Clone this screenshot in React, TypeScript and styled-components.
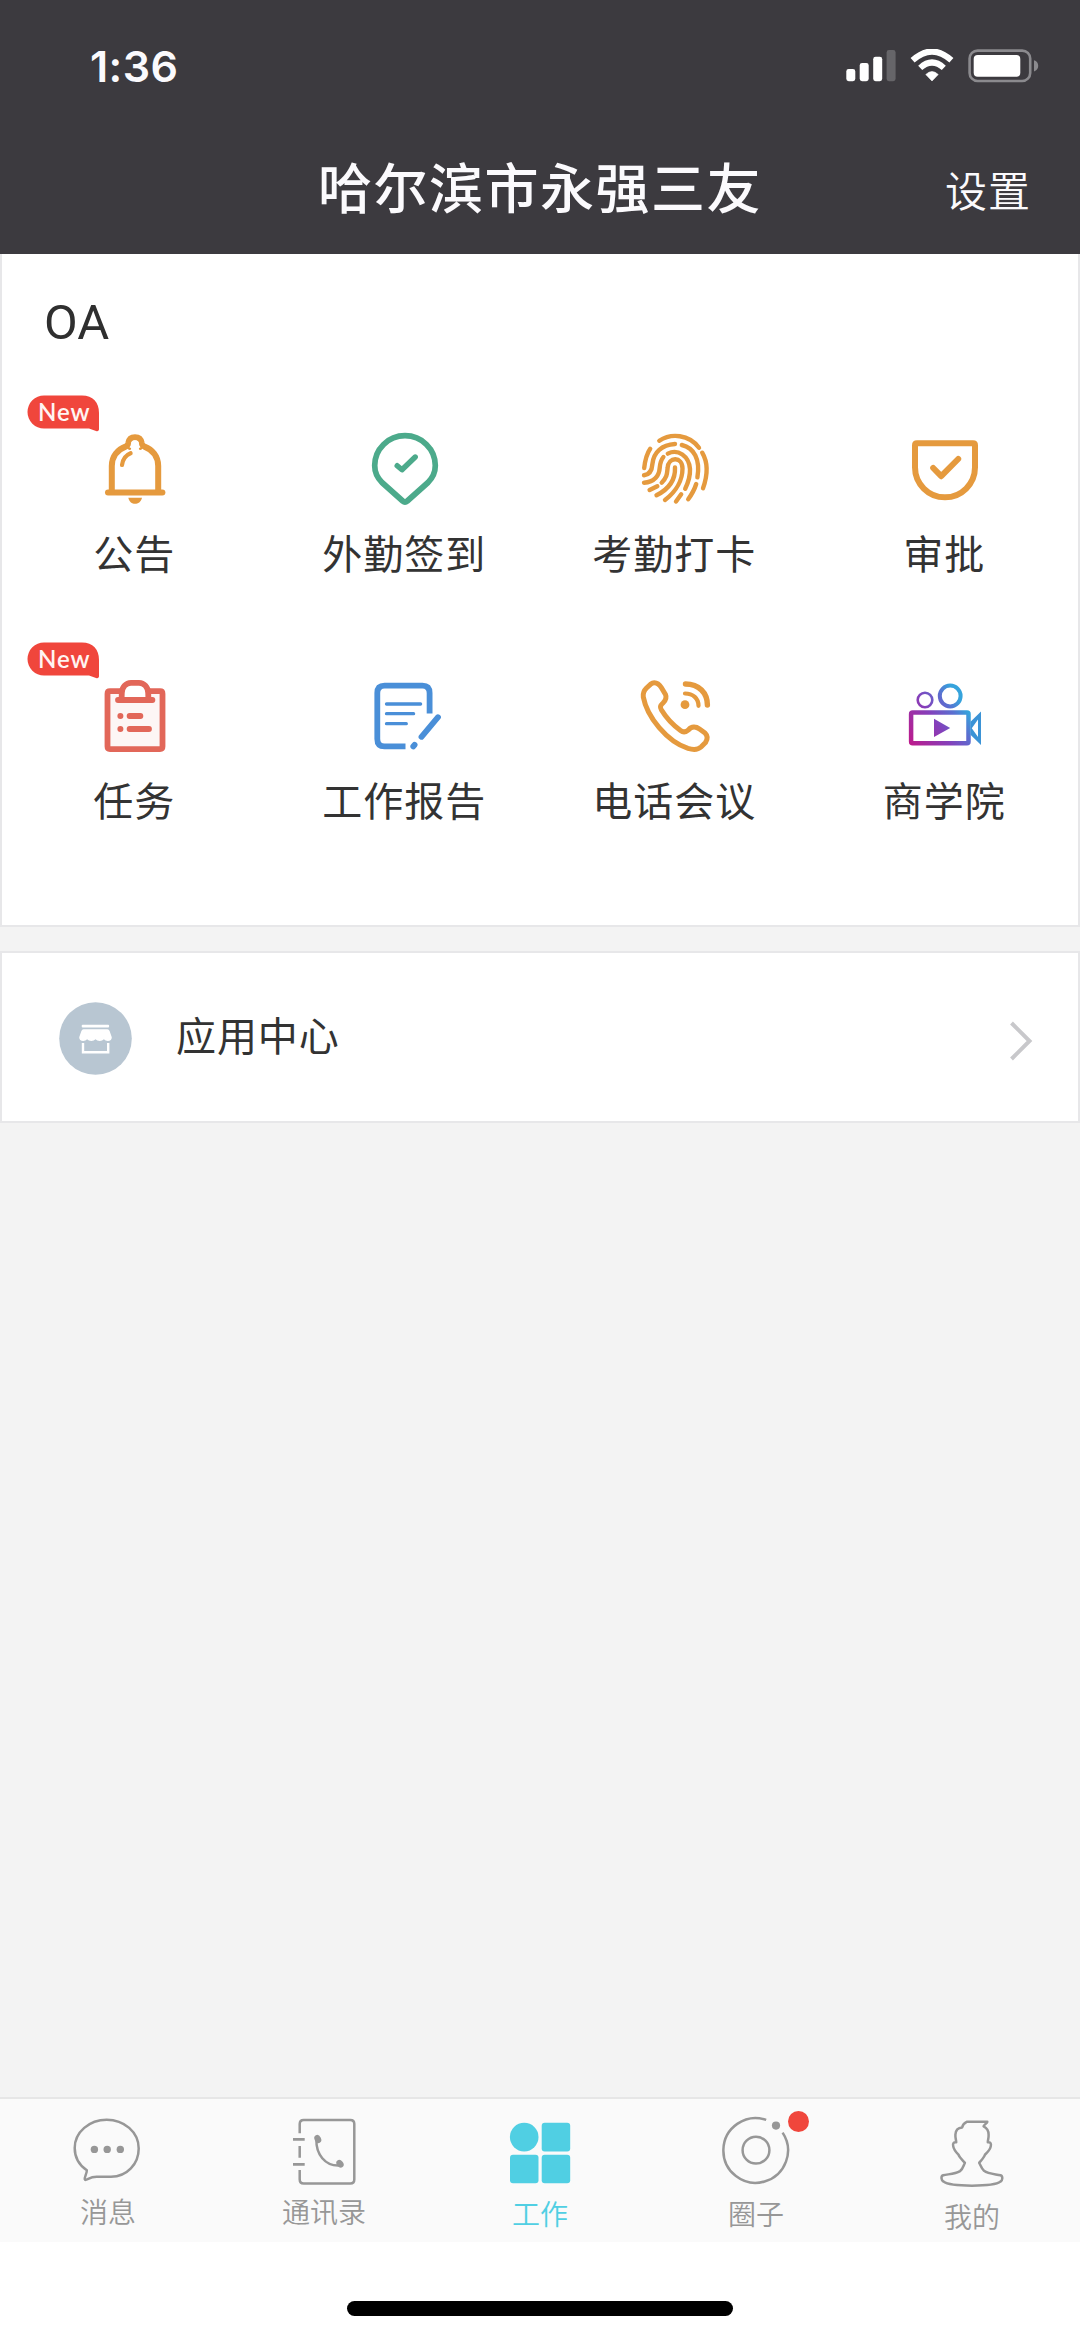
import React from "react";
import styled, { createGlobalStyle } from "styled-components";

const GlobalStyle = createGlobalStyle`
  * { box-sizing: border-box; }
  body {
    margin: 0;
    background: #ffffff;
    font-family: "Noto Sans CJK SC", "Noto Sans", sans-serif;
  }
`;

const Screen = styled.div`
  width: 1080px;
  height: 2339px;
  display: flex;
  flex-direction: column;
  background: #f3f3f3;
  overflow: hidden;
`;

const Header = styled.header`
  height: 254px;
  background: #3c3a3f;
  color: #fbfafd;
`;

const StatusBar = styled.div`
  height: 132px;
  padding: 0 41px 0 90px;
  display: flex;
  align-items: center;
  justify-content: space-between;
`;

const Clock = styled.div`
  font: 600 43px/48px Inter, sans-serif;
  letter-spacing: 0.4px;
`;

const StatusIcons = styled.div`
  display: flex;
  align-items: center;
  gap: 14px;
`;

const NavBar = styled.div`
  height: 118px;
  padding: 0 49px 8px;
  display: grid;
  grid-template-columns: 1fr auto 1fr;
  align-items: center;
`;

const NavTitle = styled.h1`
  grid-column: 2;
  margin: 0;
  font-size: 54px;
  font-weight: 500;
  line-height: 70px;
  letter-spacing: 1.5px;
  padding-bottom: 2px;
`;

const NavAction = styled.button`
  justify-self: end;
  border: 0;
  padding: 4px 0 0;
  background: none;
  color: inherit;
  font-family: inherit;
  font-size: 42px;
  font-weight: 350;
  line-height: 60px;
  letter-spacing: 1px;
`;

const Panel = styled.section`
  background: #ffffff;
  border: 2px solid #e7e7e9;
`;

const AppsPanel = styled(Panel)`
  height: 673px;
  border-top: 0;
`;

const SectionTitle = styled.h2`
  margin: 0;
  padding: 39px 0 0 42px;
  font: 400 49px/60px Roboto, sans-serif;
  color: #2f2f2f;
`;

const AppGrid = styled.div`
  margin: 37px -2px 0;
  display: grid;
  grid-template-columns: repeat(4, 270px);
  grid-auto-rows: 247px;
`;

const AppCell = styled.div`
  position: relative;
  padding-top: 33px;
  display: flex;
  flex-direction: column;
  align-items: center;
`;

const AppLabel = styled.div`
  margin-top: 9px;
  font-size: 40px;
  line-height: 60px;
  letter-spacing: 1px;
  margin-right: 1.5px;
  color: #333333;
`;

const NewBadge = styled.span`
  position: absolute;
  left: 27px;
  top: 5px;
  width: 72px;
  height: 37px;
  padding-left: 11px;
  color: #fff4f2;
  font: 600 24px/34px Lato, sans-serif;
  letter-spacing: 0.9px;
`;

const BadgeShape = styled.svg`
  position: absolute;
  left: 0;
  top: 0;
`;

const BadgeText = styled.span`
  position: relative;
`;

const CenterRow = styled(Panel)`
  margin-top: 24px;
  height: 172px;
  padding: 3px 45px 0 57px;
  display: flex;
  align-items: center;
`;

const CenterLabel = styled.div`
  flex: 1;
  margin-left: 44px;
  font-size: 40px;
  line-height: 60px;
  letter-spacing: 0.9px;
  color: #333333;
  padding-bottom: 9px;
`;

const Spacer = styled.div`
  flex: 1;
`;

const TabBar = styled.nav`
  height: 145px;
  border-top: 2px solid #e6e6e6;
  background: #fafafa;
  display: grid;
  grid-template-columns: repeat(5, 216px);
`;

const Tab = styled.div<{ $active?: boolean }>`
  position: relative;
  padding-top: 16px;
  display: flex;
  flex-direction: column;
  align-items: center;
  color: ${(p) => (p.$active ? "#50cfe3" : "#979797")};
`;

const TabLabel = styled.div<{ $gap: number }>`
  margin-top: ${(p) => p.$gap}px;
  font-size: 28px;
  font-weight: 350;
  line-height: 40px;
`;

const UnreadDot = styled.span`
  position: absolute;
  left: 140px;
  top: 12px;
  width: 21px;
  height: 21px;
  border-radius: 50%;
  background: #f0463c;
`;

const HomeArea = styled.div`
  height: 97px;
  background: #ffffff;
  display: flex;
  justify-content: center;
  padding-top: 59px;
`;

const HomeIndicator = styled.div`
  width: 386px;
  height: 15px;
  border-radius: 8px;
  background: #000000;
`;

const ORANGE = "#e59a3e";

const line = {
  fill: "none",
  strokeLinecap: "round" as const,
  strokeLinejoin: "round" as const,
};

function Icon({ children }: { children: React.ReactNode }) {
  return (
    <svg width="90" height="90" viewBox="0 0 90 90">
      {children}
    </svg>
  );
}

const Bell = () => (
  <Icon>
    <g {...line} stroke={ORANGE} strokeWidth="6">
      <path d="M18 69.5H72.4" />
      <path d="M21.8 68V43C21.8 33 28 26.5 35.5 23.6C37.5 22.8 38 21.5 38.3 20C39 16 41.5 14.2 45 14.2S51 16 51.7 20C52 21.5 52.5 22.8 54.5 23.6C62 26.5 68.2 33 68.2 43V68" />
      <path d="M32 42C32.7 36.5 36 32 40.6 30.2" strokeWidth="4.2" />
    </g>
    <path d="M38.5 22.5C38.5 24.5 41 25.5 45 25.5S51.5 24.5 51.5 22.5L54 24L51 27Q45 25.5 39 27L36 24Z" fill={ORANGE} />
    <circle cx="45" cy="21.4" r="4.1" fill="#fff" />
    <path d="M41.5 22.5H48.5L49.3 28H40.7Z" fill="#fff" />
    <path d="M38.3 74.7H52C51 79 48 80.8 45 80.8S39.3 79 38.3 74.7Z" fill={ORANGE} />
  </Icon>
);

const Pin = () => (
  <Icon>
    <g {...line} stroke="#4caa8b" strokeWidth="5.7">
      <path d="M42.7 78L22 59.5C17 54.5 14.7 48.5 14.7 42.5A30.3 29.8 0 0 1 75.3 42.5C75.3 48.5 73 54.5 68 59.5L47.3 78Q45 80 42.7 78Z" />
      <path d="M37.2 42.7L42 46.8L55.2 34" strokeWidth="5.4" />
    </g>
  </Icon>
);

const Fingerprint = () => (
  <Icon>
    <g {...line} stroke={ORANGE} strokeWidth="4.4">
      <path d="M29.3 17.8C41 9.8 59 11.3 69 24.7" />
      <path d="M20.2 25.7C16.5 31 15 38 14.2 45" />
      <path d="M72.2 29.7C78 39.5 77.8 52 73 65.3" />
      <path d="M14 52.3C20 51.5 22 47 22.4 41C23.5 29 32 21.8 45 21" />
      <path d="M51.8 22C64 25 70.5 36 67.4 54.3" />
      <path d="M66.2 61C64.5 66.5 62 71 58.2 76.3" />
      <path d="M14 59.7C25 59 29.2 52 29.7 45C30 40 31 37 33.4 34" />
      <path d="M37.8 30.6C48 25.5 59 33 60 46C60.3 53 58 60 55.2 65.7" />
      <path d="M19.6 67L27.3 63.2" />
      <path d="M31.7 59.7C37.5 54 37 50 37.6 45C38.2 33.3 52.5 33.3 52.5 45.5C52.5 56 47 68 35 77" />
      <path d="M45 44.5C45.5 56 39 66 26.5 72.3" />
      <path d="M46 78.5L51.2 71.3" />
    </g>
  </Icon>
);

const Approval = () => (
  <Icon>
    <g {...line} stroke={ORANGE} strokeWidth="6">
      <path d="M17 20.3H73Q75 20.3 75 22.3V44.3A30 30 0 0 1 15 44.3V22.3Q15 20.3 17 20.3Z" />
      <path d="M33.2 45L41.2 53.2L58.2 36" />
    </g>
  </Icon>
);

const Clipboard = () => (
  <Icon>
    <rect x="19" y="22" width="52" height="57" fill="#fdf6f5" />
    <path d="M33 30V23Q34 13 41 13H49Q57 13 58 23V30Z" fill="#fff" />
    <g {...line} stroke="#e26759" strokeWidth="5.8">
      <path d="M31 21.2H20Q17.5 21.2 17.5 23.7V76.6Q17.5 79.1 20 79.1H70Q72.5 79.1 72.5 76.6V23.7Q72.5 21.2 70 21.2H59" />
      <path d="M28 30H62.4" />
      <path d="M31.6 29L31.8 23C32 17 36 12.8 41 12.8H49C54 12.8 58 17 58.2 23L58.4 29" />
      <path d="M39.6 46H50.4M39.6 59H59" />
    </g>
    <circle cx="30.4" cy="46" r="3" fill="#e26759" />
    <circle cx="30.4" cy="59" r="3" fill="#e26759" />
  </Icon>
);

const Report = () => (
  <Icon>
    <g fill="none" stroke="#4a8fd8" strokeWidth="5.8">
      <path d="M69.6 43.5V23Q69.6 15.6 62.5 15.6H24.5Q17.3 15.6 17.3 23V69Q17.3 76.4 24.5 76.4H45.5" />
      <path d="M78 47.2L61.5 66.8" strokeLinecap="round" />
      <path d="M54.6 74.8L53.3 76.4" strokeLinecap="round" />
    </g>
    <path d="M26.5 34H60.6M26.5 43.7H53.6M26.5 53.7H46.3" {...line} stroke="#4a8fd8" strokeWidth="3.3" />
  </Icon>
);

const PhoneMeeting = () => (
  <Icon>
    <g {...line} stroke={ORANGE} strokeWidth="5">
      <path d="M24.3 12.7C27 12.7 29.5 14.5 31.3 17.5L35.5 24.5C37 28 35.5 30.5 33 33C30 35.8 29.8 37 31.5 40C36 47.5 43 55 50.5 60.5C53.5 62.8 56 62 58.5 59.8C61.5 56.2 66 56.5 69.5 59L75 63C78 66 77.5 69.5 75.5 72.5L71 77C68 79.8 63.5 80 58 78.4C37 71.5 17 47 13.3 27C12.8 23.5 14 20.5 16.5 18L20.5 14.3Q22.5 12.7 24.3 12.7Z" />
      <path d="M55 23.5C63 23.5 68.5 28.5 68.5 35.8" strokeWidth="4.2" />
      <path d="M55.5 14C69 14 77.4 23 77.4 35" strokeWidth="5.4" />
    </g>
    <circle cx="55" cy="34.7" r="4.4" fill={ORANGE} />
  </Icon>
);

const Camera = () => (
  <Icon>
    <defs>
      <linearGradient id="film" gradientUnits="userSpaceOnUse" x1="10" y1="72" x2="70" y2="32">
        <stop offset="0" stopColor="#bb1b8d" />
        <stop offset="0.45" stopColor="#8440bb" />
        <stop offset="0.72" stopColor="#5a6fd0" />
        <stop offset="0.9" stopColor="#36a3dc" />
      </linearGradient>
    </defs>
    <g fill="none" stroke="url(#film)">
      <rect x="11.1" y="42.4" width="57.4" height="30.8" rx="1.5" strokeWidth="4.5" />
      <circle cx="25" cy="30" r="7.3" strokeWidth="2.6" />
      <circle cx="50.2" cy="26" r="10.4" strokeWidth="4" />
    </g>
    <path d="M34 48.8L50.2 58L34 67Z" fill="url(#film)" />
    <path fillRule="evenodd" d="M70.5 51.7L81 41.5V75L70.5 64.8ZM71.8 58.3L78 67V49.5Z" fill="#3b93d6" />
  </Icon>
);

const Shop = () => (
  <svg width="73" height="73" viewBox="0 0 73 73">
    <circle cx="36.5" cy="36.5" r="36.3" fill="#b8c6d2" />
    <rect x="22.7" y="22.8" width="27.4" height="2.6" rx="1" fill="#fff" />
    <path d="M24.5 27.3H48.5Q50 27.3 50.6 29L52.8 35.3Q52.8 39 48.8 39Q46.3 39 44.9 37.2Q43.4 39 40.7 39Q38 39 36.5 37.2Q35 39 32.3 39Q29.6 39 28.1 37.2Q26.7 39 24.2 39Q20.2 39 20.2 35.3L22.4 29Q23 27.3 24.5 27.3Z" fill="#fff" />
    <path d="M24 41V50.2H49.2V41" fill="none" stroke="#fff" strokeWidth="2.4" />
  </svg>
);

const ChevronIcon = styled.svg`
  margin-top: 4px;
`;

const Chevron = () => (
  <ChevronIcon width="24" height="42" viewBox="0 0 24 42">
    <path d="M2.5 3L20.5 21L2.5 39" fill="none" stroke="#c8c8cb" strokeWidth="4" />
  </ChevronIcon>
);

function TabIcon({ children }: { children: React.ReactNode }) {
  return (
    <svg width="72" height="72" viewBox="0 0 72 72" fill="none" stroke="currentColor" strokeWidth="2.5" strokeLinejoin="round">
      {children}
    </svg>
  );
}

const ChatIcon = () => (
  <TabIcon>
    <path d="M24.7 61.8H39C55 61.8 66.7 49 66.7 33.5C66.7 17 52 4.7 34.7 4.7S2.7 17 2.7 33C2.7 42 7 50 14.8 55.2C15.2 58 12.2 62 12.8 64.4C13.6 66.4 17 61.8 24.7 61.8Z" />
    <g fill="currentColor" stroke="none">
      <circle cx="22.4" cy="34.4" r="3.7" />
      <circle cx="35.2" cy="34.4" r="3.7" />
      <circle cx="48.3" cy="34.4" r="3.7" />
    </g>
  </TabIcon>
);

const ContactsIcon = () => (
  <TabIcon>
    <path d="M11.7 18.3V9Q11.7 5 15.7 5H62.3Q66.3 5 66.3 9V64.5Q66.3 68.5 62.3 68.5H15.7Q11.7 68.5 11.7 64.5V55M11.7 31V42.7" />
    <path d="M5 24.3H16.7M5 49.3H16.7" strokeWidth="2.8" />
    <path d="M28.4 25C28 39 37 51 51 50.5" />
    <g fill="currentColor" stroke="none">
      <ellipse cx="29.8" cy="24" rx="3.2" ry="4.2" transform="rotate(-28 29.8 24)" />
      <ellipse cx="52" cy="48.8" rx="3.2" ry="4.2" transform="rotate(-38 52 48.8)" />
    </g>
  </TabIcon>
);

const WorkIcon = () => (
  <TabIcon>
    <g fill="currentColor" stroke="none">
      <circle cx="20.2" cy="22.1" r="14.3" />
      <rect x="37.7" y="7.8" width="28.5" height="28.6" rx="3" />
      <rect x="6" y="39.7" width="28.5" height="28.6" rx="3" />
      <rect x="37.7" y="39.7" width="28.5" height="28.6" rx="3" />
    </g>
  </TabIcon>
);

const CircleIcon = () => (
  <TabIcon>
    <path d="M46.2 4.9A32.3 32.3 0 1 0 62.6 17.6" />
    <circle cx="36" cy="35.2" r="13.4" />
    <circle cx="56" cy="10.6" r="4.1" fill="currentColor" stroke="none" />
  </TabIcon>
);

const ProfileIcon = () => (
  <TabIcon>
    <path d="M30.7 7.7H51.3C50.8 9.5 48.5 10 47.6 12.2C51.8 14.3 52.6 17 52.6 20.5C52.8 24 51.8 26 51.8 28.2C54.2 28 55.5 29 54.8 32C54.2 36 51 38.5 49 40.5C48 43.5 45 46.5 43.2 48.7C44.5 51 45.5 54.5 48 56.7C52.5 60 60 60 64.5 61.2C67 62 66.8 66 64.5 67.5C60 71 50 71.6 36 71.6S12 71 7.5 67.5C5 66 4.7 62 7.2 61.2C12 60 19 60 24 57C27 55 27.5 51 28.9 48.7C27 46.5 23.5 43.5 22.5 40.5C20.5 38.5 17.8 36 17.2 32C16.5 29 17.8 28 20.2 28.2C20.2 26 19.2 24 19.4 20.5C19.6 16.5 21.5 13.5 26.2 13.3C26.5 11 28.5 8.8 30.7 7.7Z" transform="translate(0 -0.9)" />
  </TabIcon>
);

const Signal = () => (
  <svg width="50" height="34" viewBox="0 0 50 34">
    <g fill="#fff">
      <rect x="0.3" y="20" width="9" height="12.2" rx="2.4" />
      <rect x="13.7" y="14" width="9" height="18.2" rx="2.4" />
      <rect x="27.2" y="7.8" width="9" height="24.4" rx="2.4" />
      <rect x="40.6" y="1" width="9" height="31.2" rx="2.4" opacity="0.22" />
    </g>
  </svg>
);

const Wifi = () => (
  <svg width="44" height="34" viewBox="0 0 44 34">
    <path d="M22 32L15.8 25.5Q22 19.5 28.2 25.5Z" fill="#fff" stroke="#fff" strokeWidth="0.6" />
    <path d="M10.2 18.9Q22 8.1 33.8 18.9" fill="none" stroke="#fff" strokeWidth="6" />
    <path d="M2.6 11.3Q22 -6.2 41.4 11.3" fill="none" stroke="#fff" strokeWidth="6" />
  </svg>
);

const Battery = () => (
  <svg width="71" height="34" viewBox="0 0 71 34">
    <rect x="1.6" y="1.6" width="60.6" height="30.4" rx="8" fill="none" stroke="#8b8a8e" strokeWidth="2.6" />
    <rect x="5.7" y="5.9" width="46.6" height="21.9" rx="4" fill="#fff" />
    <path d="M66 11.2Q70.2 12.5 70.2 16.8T66 22.4Z" fill="#8b8a8e" />
  </svg>
);

const apps = [
  { label: "公告", icon: Bell, isNew: true },
  { label: "外勤签到", icon: Pin },
  { label: "考勤打卡", icon: Fingerprint },
  { label: "审批", icon: Approval },
  { label: "任务", icon: Clipboard, isNew: true },
  { label: "工作报告", icon: Report },
  { label: "电话会议", icon: PhoneMeeting },
  { label: "商学院", icon: Camera },
];

const tabs = [
  { label: "消息", icon: ChatIcon, gap: 4 },
  { label: "通讯录", icon: ContactsIcon, gap: 4 },
  { label: "工作", icon: WorkIcon, gap: 6, active: true },
  { label: "圈子", icon: CircleIcon, gap: 6, unread: true },
  { label: "我的", icon: ProfileIcon, gap: 9 },
];

export default function App() {
  return (
    <Screen>
      <GlobalStyle />
      <Header>
        <StatusBar>
          <Clock>1:36</Clock>
          <StatusIcons>
            <Signal />
            <Wifi />
            <Battery />
          </StatusIcons>
        </StatusBar>
        <NavBar>
          <NavTitle>哈尔滨市永强三友</NavTitle>
          <NavAction>设置</NavAction>
        </NavBar>
      </Header>

      <AppsPanel>
        <SectionTitle>OA</SectionTitle>
        <AppGrid>
          {apps.map(({ label, icon: Glyph, isNew }) => (
            <AppCell key={label}>
              {isNew && (
                <NewBadge>
                  <BadgeShape width="72" height="37" viewBox="0 0 72 37">
                    <path d="M17 0.5H55C66 0.5 72 7 72 18V34.5Q71.5 37 69 36L62 33.5H17A16.5 16.5 0 0 1 17 0.5Z" fill="#f0463c" />
                  </BadgeShape>
                  <BadgeText>New</BadgeText>
                </NewBadge>
              )}
              <Glyph />
              <AppLabel>{label}</AppLabel>
            </AppCell>
          ))}
        </AppGrid>
      </AppsPanel>

      <CenterRow>
        <Shop />
        <CenterLabel>应用中心</CenterLabel>
        <Chevron />
      </CenterRow>

      <Spacer />

      <TabBar>
        {tabs.map(({ label, icon: Glyph, gap, active, unread }) => (
          <Tab key={label} $active={active}>
            <Glyph />
            <TabLabel $gap={gap}>{label}</TabLabel>
            {unread && <UnreadDot />}
          </Tab>
        ))}
      </TabBar>
      <HomeArea>
        <HomeIndicator />
      </HomeArea>
    </Screen>
  );
}
